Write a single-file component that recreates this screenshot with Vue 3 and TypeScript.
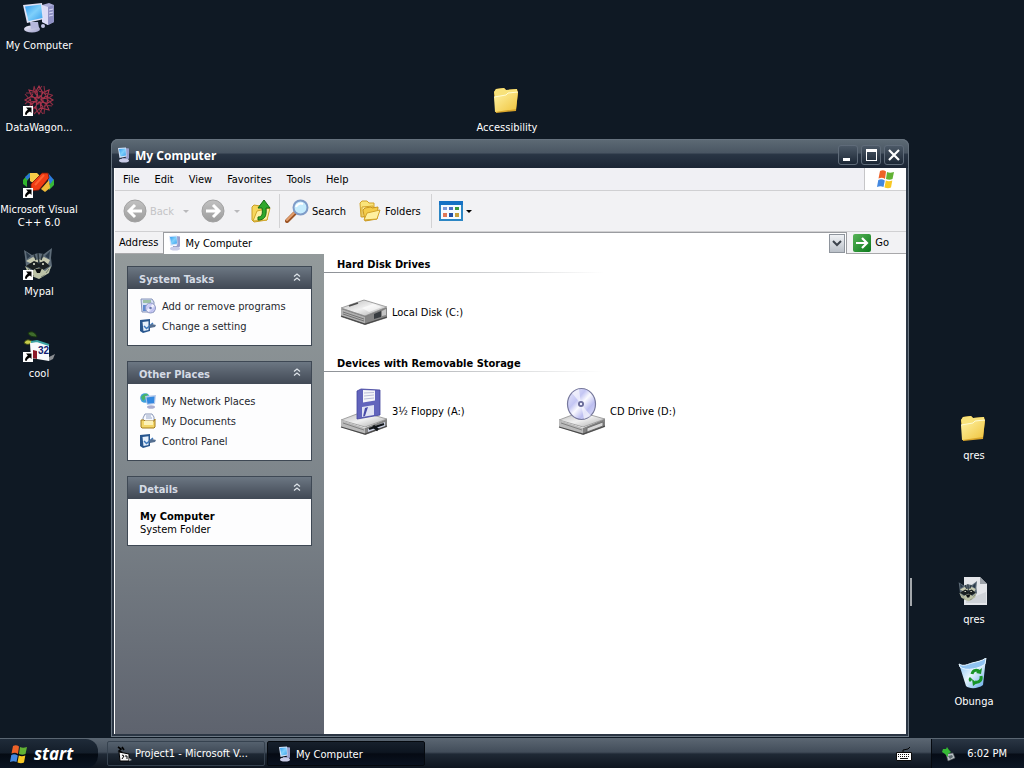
<script setup lang="ts">
import { ref } from 'vue'

interface DesktopIcon {
  label: string
  icon: string
  x: number
  y: number
  side?: 'right'
  shortcut?: boolean
  mark?: string
}

const desktopIcons: DesktopIcon[] = [
  { label: 'My Computer', icon: 'computer', x: 0, y: 2 },
  { label: 'DataWagon...', icon: 'wagon', x: 0, y: 84, shortcut: true },
  { label: 'Microsoft Visual\nC++ 6.0', icon: 'visual', x: 0, y: 166, shortcut: true },
  { label: 'Mypal', icon: 'raccoon', x: 0, y: 248, shortcut: true },
  { label: 'cool', icon: 'cool', x: 0, y: 330, shortcut: true, mark: '32' },
  { label: 'Accessibility', icon: 'folder', x: 468, y: 84 },
  { label: 'qres', icon: 'folder', x: 11, y: 412, side: 'right' },
  { label: 'qres', icon: 'raccoonfile', x: 11, y: 576, side: 'right' },
  { label: 'Obunga', icon: 'bin', x: 11, y: 658, side: 'right' },
]

function place(item: DesktopIcon) {
  return { [item.side ?? 'left']: item.x + 'px', top: item.y + 'px' }
}

const menus = ['File', 'Edit', 'View', 'Favorites', 'Tools', 'Help']

const taskPanels = [
  {
    title: 'System Tasks',
    links: [
      { label: 'Add or remove programs', icon: 'programs' },
      { label: 'Change a setting', icon: 'setting' },
    ],
  },
  {
    title: 'Other Places',
    links: [
      { label: 'My Network Places', icon: 'network' },
      { label: 'My Documents', icon: 'documents' },
      { label: 'Control Panel', icon: 'setting' },
    ],
  },
]

const groups = [
  { title: 'Hard Disk Drives', items: [{ label: 'Local Disk (C:)', icon: 'disk' }] },
  {
    title: 'Devices with Removable Storage',
    items: [
      { label: '3½ Floppy (A:)', icon: 'floppy' },
      { label: 'CD Drive (D:)', icon: 'cd' },
    ],
  },
]

const address = ref('My Computer')
</script>

<template>
  <div class="screen">
    <svg class="sprite" aria-hidden="true">
      <defs>
        <linearGradient id="gScreen" x1="0" y1="0" x2="1" y2="1">
          <stop offset="0" stop-color="#2f9bf0" /><stop offset="0.5" stop-color="#7fd0fb" /><stop offset="1" stop-color="#3aa0ec" />
        </linearGradient>
        <linearGradient id="gCase" x1="0" y1="0" x2="1" y2="1">
          <stop offset="0" stop-color="#f2f2fc" /><stop offset="1" stop-color="#9a9cc8" />
        </linearGradient>
        <linearGradient id="gFolder" x1="0" y1="0" x2="1" y2="1">
          <stop offset="0" stop-color="#fff3a4" /><stop offset="1" stop-color="#efc33c" />
        </linearGradient>
        <linearGradient id="gBin" x1="0" y1="0" x2="1" y2="1">
          <stop offset="0" stop-color="#6fb4f0" /><stop offset="0.5" stop-color="#e6f5fd" /><stop offset="1" stop-color="#5ca2e6" />
        </linearGradient>
        <linearGradient id="gMetal" x1="0" y1="0" x2="1" y2="1">
          <stop offset="0" stop-color="#b8b8b8" /><stop offset="0.5" stop-color="#f0f0f0" /><stop offset="1" stop-color="#a8a8a8" />
        </linearGradient>
        <linearGradient id="gDisc" x1="0" y1="0" x2="1" y2="1">
          <stop offset="0" stop-color="#ececfa" /><stop offset="0.35" stop-color="#c4c6f4" /><stop offset="0.5" stop-color="#fafaff" /><stop offset="0.7" stop-color="#bcbef0" /><stop offset="1" stop-color="#e6e6fa" />
        </linearGradient>
        <linearGradient id="gGray" x1="0" y1="0" x2="0" y2="1">
          <stop offset="0" stop-color="#c2c2c2" /><stop offset="1" stop-color="#9c9c9c" />
        </linearGradient>
        <linearGradient id="gGo" x1="0" y1="0" x2="1" y2="1">
          <stop offset="0" stop-color="#58b458" /><stop offset="1" stop-color="#0c7a1c" />
        </linearGradient>
      </defs>

      <symbol id="i-computer" viewBox="0 0 32 32">
        <path d="M19 3l7-2 5 2v17l-6 3-6-3z" fill="#a9abd6" />
        <path d="M19 3l6 2v18l-6-3z" fill="#dcdcf6" />
        <path d="M25 5l6-2v17l-6 3z" fill="#8f91c4" />
        <path d="M26 8l4-1M26 11l4-1M26 14l4-1" stroke="#d8d9f6" stroke-width="1" />
        <ellipse cx="9" cy="27" rx="8" ry="3.600" fill="url(#gCase)" />
        <path d="M7 20h8l1 6-8 1z" fill="#b6b8dc" />
        <path d="M0 3l19-2 2 16-17 4z" fill="#dfe2f6" />
        <path d="M2 4.500l16-2 1.500 13.500-14 3z" fill="url(#gScreen)" />
        <circle cx="20" cy="24" r="2" fill="#c2c4e4" />
      </symbol>

      <symbol id="i-pc" viewBox="0 0 16 16">
        <path d="M9 1l4 .5v10l-3 1.500z" fill="#9a9fcc" />
        <path d="M2 1l8-.5.5 9-7 1.500z" fill="#d6e4fa" />
        <path d="M3 2l6.500-.5.5 7-5.500 1z" fill="url(#gScreen)" />
        <path d="M6 11h4l1 2H6z" fill="#8488b4" />
        <ellipse cx="8" cy="13.500" rx="5" ry="2" fill="#c9cce8" />
      </symbol>

      <symbol id="i-wagon" viewBox="0 0 32 32">
        <g fill="none" stroke="#a8344c" stroke-width="1.100">
          <circle cx="16" cy="16" r="4" stroke-dasharray="2 1" />
          <circle cx="16" cy="16" r="8.500" stroke-dasharray="3 2" />
          <path d="M16 2l4 7-4 5-4-5zM16 30l4-7-4-5-4 5zM2 16l7-4 5 4-5 4zM30 16l-7-4-5 4 5 4zM6 6l8 2 1 6-6-1zM26 6l-2 8-6 1 1-6zM6 26l2-8 6-1-1 6zM26 26l-8-2-1-6 6 1z" />
          <path d="M11 2l2 7 6-7M21 2l1 7 7 2M30 11l-6 4 6 6M29 22l-7-1-1 9M20 30l-4-5-5 5M10 29v-6l-7-1M2 20l5-4-5-6M3 9l7 0 1-6" stroke="#8a2c42" />
        </g>
      </symbol>

      <symbol id="i-visual" viewBox="0 0 32 32">
        <path d="M0 14l6-7 3 2-5 6v6l-4-3z" fill="#30b42c" />
        <path d="M2 11l5-4 2 2-5 5z" fill="#2a74d8" />
        <path d="M7 7h7l4 4-5 8-6-4z" fill="#f8cc48" />
        <path d="M25 7l6 7-3 6-3-5z" fill="#2c7ce0" />
        <path d="M31 13v6l-5 5-1-4 3-3z" fill="#38b838" />
        <path d="M18 23l8-9 1 8-5 4z" fill="#f0bc38" />
        <path d="M8 18L19 7l6 0 1 5-10 12-8 1z" fill="#f03c14" stroke="#701408" stroke-width=".8" />
        <path d="M12 19l9-10" stroke="#ff6030" stroke-width="2" />
      </symbol>

      <symbol id="i-raccoon" viewBox="0 0 32 32">
        <path d="M2 9L1 2l8 5 6-2 6 1 8-6-1 10 1 8-4 7-8 4-8-3-6-8z" fill="#5e6c78" />
        <path d="M3 4l5 4-4 3zM27 3l-5 5 4 3z" fill="#2a3a4a" />
        <path d="M3 13l7-4 5 3 6-3 6 3-2 4-8-2-8 2z" fill="#c6c9b0" />
        <path d="M3 18l8-5 5 2 5-2 6 5-7 4-4-3-6 3z" fill="#1a2021" />
        <path d="M2 18l7 5 5-3 4 0 4 3 6-5-2 7-5 3-5 3-5-2-6-4z" fill="#bcc2a6" />
        <path d="M12 21l7-1-2 5h-3z" fill="#0c1012" />
        <path d="M15 5l1 11M11 6l2 6M20 6l-2 6" stroke="#28343a" stroke-width="1.500" />
        <path d="M10 16h2M19 16h2" stroke="#e8ead8" stroke-width="1.500" />
        <path d="M7 26l4 2M22 27l-4 2M5 21l4 4M26 21l-3 4" stroke="#747c6c" stroke-width="1" />
      </symbol>

      <symbol id="i-cool" viewBox="0 0 32 32">
        <path d="M5 3c4-3 8 0 9 4-5 0-8-1-9-4z" fill="#3f6b2c" stroke="#16300e" />
        <path d="M1 13c2-4 5-4 9-1-4 3-6 3-9 1z" fill="#c8cc4c" stroke="#3c4a10" />
        <path d="M7 13l6-2 13 4v16L8 28z" fill="#f8fafc" />
        <path d="M8 12l6-1 12 4" stroke="#3ca4a4" stroke-width="2" fill="none" />
        <path d="M10 20l4 1v8l-4-1z" fill="#8c1828" />
        <path d="M26 27l6-3-2 5-4 2z" fill="#8b8e92" />
      </symbol>

      <symbol id="i-folder" viewBox="0 0 32 32">
        <path d="M3 8l2-3 8-1 2 2 11-1 1 3-2 19-20 2z" fill="#d9a52b" />
        <path d="M3 8l2-3 8-1 2 2 11-1v5L4 14z" fill="#f8e27a" />
        <path d="M3 13l12-2 2-2 10-1-2 17-21 3z" fill="url(#gFolder)" />
        <path d="M3 13l12-2 2-2 10-1" fill="none" stroke="#fffbd2" stroke-width="1" />
      </symbol>

      <symbol id="i-raccoonfile" viewBox="0 0 32 32">
        <path d="M6 1h16l7 7v21H6z" fill="#e4e6ea" />
        <path d="M22 1v7h7z" fill="#9ba1a8" />
        <path d="M8 24l20-8v11H8z" fill="#cfd3d8" />
        <use href="#i-raccoon" x="0" y="5" width="21" height="21" />
      </symbol>

      <symbol id="i-bin" viewBox="0 0 32 32">
        <path d="M1 6c5 3 9 0 13-1s10-2 14-5l-3 27c-5 4-14 4-17 1z" fill="url(#gBin)" />
        <path d="M1 6c5 3 9 0 13-1s10-2 14-5l-1 6c-4 4-19 8-25 3z" fill="#8fc2f0" stroke="#e8f6ff" stroke-width="1" />
        <g fill="none" stroke="#189428" stroke-width="3">
          <path d="M14 16c1-4 5-5 8-2M23 18c1 4-2 7-6 6M13 23c-1-1-1-2 0-3" />
        </g>
        <path d="M24 10l-1 6-5-1zM14 21l1 7 4-3z" fill="#189428" />
      </symbol>

      <symbol id="i-shortcut" viewBox="0 0 10 10">
        <path d="M0 0h10v10H0z" fill="#fff" />
        <path d="M3 1.500h5.500V7L7 5.500C5 6.500 4 7.500 3.600 9L2 8.500C2 6.500 3 5 4.800 3.500z" fill="#000" />
      </symbol>

      <symbol id="i-programs" viewBox="0 0 16 16">
        <path d="M1 1h11l2 3v10H2z" fill="#d5e0f4" stroke="#8592b8" />
        <path d="M3 2h8v3H3z" fill="#9cc0a4" />
        <path d="M3 7h5v6H3z" fill="#5f8ad0" />
        <circle cx="10.500" cy="10" r="5" fill="url(#gDisc)" stroke="#8f9ac4" />
        <circle cx="10.500" cy="10" r="1.300" fill="#6b78b0" />
      </symbol>

      <symbol id="i-setting" viewBox="0 0 16 16">
        <path d="M0 2l10-1v12l-7 2-3-2z" fill="#28568e" />
        <path d="M2.500 4l6-.8v8.800l-5 1z" fill="#e6f0fc" />
        <path d="M4 8l2.500 2.500L13 5" fill="none" stroke="#3d78bc" stroke-width="1.500" />
        <path d="M9 8l3-2 4 1-1 2-5 1z" fill="#566f90" />
      </symbol>

      <symbol id="i-network" viewBox="0 0 16 16">
        <circle cx="5" cy="5" r="4.800" fill="#3f9fdc" />
        <path d="M1 4c2-3 5-4 7-3L6 5 3 8z" fill="#48b468" />
        <path d="M5 3l11-1-1 9-8 1z" fill="#b5c8ea" />
        <path d="M6.500 4.500l8-1-.5 6.500-6.500.8z" fill="#3388e0" />
        <ellipse cx="11" cy="14" rx="4" ry="1.800" fill="#a9add0" />
      </symbol>

      <symbol id="i-documents" viewBox="0 0 16 16">
        <path d="M3 5l2-4h7l2 3v6H3z" fill="#f7f9ff" stroke="#8b98b8" />
        <path d="M6 3h5M6 5h6" stroke="#98a8c8" />
        <path d="M1 7h3l1 1h9l1-2v8l-1 1H2l-1-1z" fill="#f3d66a" stroke="#a37c1c" />
        <path d="M4 8h9v4H4z" fill="#fdf2b8" />
      </symbol>

      <symbol id="i-disk" viewBox="0 0 48 48">
        <path d="M1 21l23-9 23 8v10L25 37 1 29z" fill="#7c7c7c" />
        <path d="M1 20l23-8 23 7-22 9z" fill="url(#gMetal)" stroke="#8e8e8e" stroke-width=".8" />
        <path d="M1 21l24 8v7L1 28z" fill="#b0b0b0" />
        <path d="M25 29l22-9v9l-22 7z" fill="#858585" />
        <path d="M34 26l7-3v6l-7 2z" fill="#383c40" />
        <path d="M42 23l4-2v6l-4 1z" fill="#c4c4c4" />
        <path d="M3 24l21 7M3 26l21 7" stroke="#747474" stroke-width="1" />
        <path d="M9 18l9-3" stroke="#4c4c4c" stroke-width="1.500" />
        <path d="M22 20l11-4 9 3-13 5z" fill="#fff" opacity=".6" />
        <path d="M1 28l24 8 22-7" fill="none" stroke="#484848" stroke-width="1.200" />
      </symbol>

      <symbol id="i-drivebase" viewBox="0 0 48 48">
        <path d="M1 33l21-8 25 7-22 8z" fill="url(#gMetal)" stroke="#909090" stroke-width=".8" />
        <path d="M1 33l24 8v7L1 40z" fill="#bababa" />
        <path d="M25 41l22-9v8l-22 8z" fill="#838383" />
        <path d="M3 36l21 7" stroke="#828282" stroke-width="1" />
        <path d="M1 40l24 7 22-8" fill="none" stroke="#484848" stroke-width="1.200" />
      </symbol>

      <symbol id="i-floppy" viewBox="0 0 48 48">
        <use href="#i-drivebase" />
        <path d="M28 42l17-7v4l-17 6z" fill="#cdd2e4" />
        <path d="M29 42l15-5" stroke="#101418" stroke-width="2" />
        <path d="M33 39l5 4" stroke="#101418" stroke-width="3" />
        <path d="M17 4l4-2 19 1v25l-23 4z" fill="#6264bc" stroke="#42449c" stroke-width=".8" />
        <path d="M23 3l12 .5v10l-12 2z" fill="#f5f5f9" />
        <path d="M24 6l10-.5M24 9l10-1M24 12l10-1" stroke="#bbbdd8" />
        <path d="M22 20l12-2v10l-12 2z" fill="#e1e3f4" />
        <path d="M25 21l3-1-3 9-2 .5z" fill="#474aa8" />
      </symbol>

      <symbol id="i-cd" viewBox="0 0 48 48">
        <use href="#i-drivebase" />
        <path d="M29 41l16-6v4l-16 6z" fill="#d7d7d7" stroke="#626262" stroke-width=".8" />
        <ellipse cx="23.500" cy="17" rx="14" ry="15.500" fill="url(#gDisc)" stroke="#77799c" stroke-width="1.200" />
        <path d="M23 17L14 6l7-4zM23 17l10 12-7 3z" fill="#fff" opacity=".6" />
        <circle cx="23" cy="17" r="3" fill="#686a98" />
        <circle cx="23" cy="17" r="1.200" fill="#f3f3ff" />
      </symbol>

      <symbol id="i-flag" viewBox="0 0 20 20">
        <path d="M4 2c2-1 4-1 6 .5L9 10c-2-1.500-4-1.500-6.500-.5z" fill="#ee6228" />
        <path d="M11 3c2 1 4 1 7 0l-1.500 7c-2 1-4 1-6.500 0z" fill="#62b234" />
        <path d="M2.300 11c2-1 4-1 6.500.5L7.500 18C5.500 17 3.500 17 1 18z" fill="#4388e0" />
        <path d="M9.800 11.500c2 1 4 1 6.500 0L15 18.500c-2 1-4 1-6.500 0z" fill="#f8c824" />
      </symbol>

      <symbol id="i-back" viewBox="0 0 24 24">
        <circle cx="12" cy="12" r="11" fill="url(#gGray)" stroke="#a2a2a2" />
        <path d="M19 12H7M12 6l-6 6 6 6" fill="none" stroke="#fff" stroke-width="3" />
      </symbol>
      <symbol id="i-forward" viewBox="0 0 24 24">
        <circle cx="12" cy="12" r="11" fill="url(#gGray)" stroke="#a2a2a2" />
        <path d="M5 12h12M12 6l6 6-6 6" fill="none" stroke="#fff" stroke-width="3" />
      </symbol>

      <symbol id="i-up" viewBox="0 0 24 24">
        <path d="M3 8l2-2 6 1 2 2h5v12l-13 2-2-2z" fill="#f6d75c" stroke="#c99e24" />
        <path d="M4 22l4-10 13-3-3 12z" fill="#fff0a0" stroke="#cfa62c" />
        <path d="M9 18c4 0 5-3 4-9h-4l6-8 6 8h-4c1 9-2 12-8 12z" fill="#30a82c" stroke="#146c14" />
      </symbol>

      <symbol id="i-search" viewBox="0 0 24 24">
        <path d="M10 14l-8 8" stroke="#9b5426" stroke-width="4" stroke-linecap="round" />
        <path d="M9 14l-7 7" stroke="#e4a070" stroke-width="2" stroke-linecap="round" />
        <circle cx="15.500" cy="8.500" r="7" fill="#c6ecfd" stroke="#7f9cc8" stroke-width="2" />
        <path d="M11 8c1-3 4-4 7-3" stroke="#fff" stroke-width="2" fill="none" />
      </symbol>

      <symbol id="i-folders" viewBox="0 0 24 24">
        <path d="M2 4l2-2h5l2 2h5v12L3 18z" fill="#fae47a" stroke="#d2a32a" />
        <path d="M4 8l11-1v8L4 18z" fill="#ffefa2" stroke="#d2a32a" />
        <path d="M5 11l2-2 6-1 1 1 6-1-1 12-12 2z" fill="#f4cc4a" stroke="#c8961e" />
        <path d="M6 21l3-7 13-3-3 9z" fill="#fff0a0" stroke="#d2a32a" />
      </symbol>

      <symbol id="i-views" viewBox="0 0 24 20">
        <path d="M1 1h22v18H1z" fill="#f7fbff" stroke="#2c86c4" stroke-width="2" />
        <path d="M0 0h24v4H0z" fill="#1672c4" />
        <path d="M4 6h4v3H4z" fill="#7c98d8" /><path d="M10 6h4v3h-4z" fill="#4a72c8" /><path d="M16 6h4v3h-4z" fill="#3c9a3c" />
        <path d="M4 12h4v4H4z" fill="#e07858" /><path d="M10 12h4v4h-4z" fill="#2450a4" /><path d="M16 12h4v4h-4z" fill="#c8a03c" />
      </symbol>

      <symbol id="i-go" viewBox="0 0 18 18">
        <rect width="18" height="18" rx="2" fill="url(#gGo)" />
        <path d="M3 9h10M9 4l5 5-5 5" fill="none" stroke="#fff" stroke-width="2.200" />
      </symbol>

      <symbol id="i-project" viewBox="0 0 16 16">
        <path d="M2 1l3 2-2 2 4 2M6 1l2 3" stroke="#000" stroke-width="1.600" fill="none" />
        <path d="M3 6l10 2v7H4z" fill="#f4f4f4" stroke="#000" />
        <path d="M6 9l2 1-2 3M9 10h2v3" stroke="#000" fill="none" />
        <path d="M13 12l3 2-3 1z" fill="#b6b6b6" />
      </symbol>

      <symbol id="i-keyboard" viewBox="0 0 16 14">
        <path d="M7 5V3l5-1 2-2" fill="none" stroke="#050505" />
        <path d="M.5 5.500h15v8H.5z" fill="#fff" stroke="#0a0a0a" />
        <path d="M2 7.500h12M2 9.500h12" stroke="#111" stroke-dasharray="1 1" />
        <path d="M4 11.500h8" stroke="#111" />
      </symbol>

      <symbol id="i-tray" viewBox="0 0 16 16">
        <path d="M5 8l7-1 2 5-7 3z" fill="#b9c0c4" stroke="#4c5458" stroke-width=".6" />
        <path d="M7 10l4-1 1 2-3 2z" fill="#5e6a70" />
        <path d="M2 3l3 0 1-2 2 3 2 2-3 2v3L4 8 1 6z" fill="#35ba35" />
      </symbol>

      <symbol id="i-chevrons" viewBox="0 0 8 8">
        <path d="M1 3.500L4 1l3 2.500M1 7.500L4 5l3 2.500" fill="none" stroke="#dfe4ea" stroke-width="1.200" />
      </symbol>
    </svg>

    <main class="desktop">
      <a
        v-for="(item, i) in desktopIcons"
        :key="i"
        href="#"
        class="desk-icon"
        :style="place(item)"
      >
        <span class="glyph">
          <svg class="s32"><use :href="'#i-' + item.icon" /></svg>
          <span v-if="item.mark" class="mark">{{ item.mark }}</span>
          <svg v-if="item.shortcut" class="shortcut"><use href="#i-shortcut" /></svg>
        </span>
        <span class="desk-label">{{ item.label }}</span>
      </a>
      <span class="sliver"></span>

      <section class="window" aria-label="My Computer">
        <header class="titlebar">
          <svg class="s16"><use href="#i-pc" /></svg>
          <h1>My Computer</h1>
          <div class="controls">
            <button type="button" aria-label="Minimize">
              <svg viewBox="0 0 18 18"><path d="M4 12h7v3H4z" fill="#fff" /></svg>
            </button>
            <button type="button" aria-label="Maximize">
              <svg viewBox="0 0 18 18"><path d="M4 3h11v12H4zM5 6v8h9V6z" fill="#fff" fill-rule="evenodd" /></svg>
            </button>
            <button type="button" aria-label="Close">
              <svg viewBox="0 0 18 18"><path d="M4 4l10 10M14 4L4 14" stroke="#fff" stroke-width="2.200" /></svg>
            </button>
          </div>
        </header>

        <div class="client">
          <nav class="menubar">
            <button v-for="menu in menus" :key="menu" type="button">{{ menu }}</button>
            <span class="brand"><svg class="s20"><use href="#i-flag" /></svg></span>
          </nav>

          <div class="toolbar">
            <button type="button" class="back" disabled>
              <svg class="s24"><use href="#i-back" /></svg><span>Back</span><i class="caret"></i>
            </button>
            <button type="button" class="forward" aria-label="Forward" disabled>
              <svg class="s24"><use href="#i-forward" /></svg><i class="caret"></i>
            </button>
            <button type="button" class="up" aria-label="Up">
              <svg class="s24"><use href="#i-up" /></svg>
            </button>
            <span class="rule"></span>
            <button type="button" class="search"><svg class="s24"><use href="#i-search" /></svg>Search</button>
            <button type="button" class="folders"><svg class="s24"><use href="#i-folders" /></svg>Folders</button>
            <span class="rule"></span>
            <button type="button" class="views" aria-label="Views">
              <svg class="s24"><use href="#i-views" /></svg><i class="caret"></i>
            </button>
          </div>

          <div class="addressbar">
            <label for="address">Address</label>
            <div class="combo">
              <svg class="s16"><use href="#i-pc" /></svg>
              <input id="address" v-model="address" type="text" />
              <button type="button" aria-label="Show addresses">
                <svg viewBox="0 0 10 8"><path d="M1 2l4 4 4-4" fill="none" stroke="#3c434c" stroke-width="2" /></svg>
              </button>
            </div>
            <button type="button" class="go"><svg><use href="#i-go" /></svg>Go</button>
          </div>

          <div class="body">
            <aside class="sidebar">
              <section v-for="panel in taskPanels" :key="panel.title" class="panel">
                <button type="button" class="panel-head">
                  {{ panel.title }}<svg><use href="#i-chevrons" /></svg>
                </button>
                <ul>
                  <li v-for="link in panel.links" :key="link.label">
                    <a href="#"><svg class="s16"><use :href="'#i-' + link.icon" /></svg>{{ link.label }}</a>
                  </li>
                </ul>
              </section>
              <section class="panel">
                <button type="button" class="panel-head">
                  Details<svg><use href="#i-chevrons" /></svg>
                </button>
                <div class="details">
                  <strong>My Computer</strong>
                  <span>System Folder</span>
                </div>
              </section>
            </aside>

            <div class="content">
              <section v-for="group in groups" :key="group.title">
                <h2>{{ group.title }}</h2>
                <div class="items">
                  <a v-for="drive in group.items" :key="drive.label" href="#">
                    <svg class="s48"><use :href="'#i-' + drive.icon" /></svg>{{ drive.label }}
                  </a>
                </div>
              </section>
            </div>
          </div>
        </div>
      </section>
    </main>

    <footer class="taskbar">
      <button type="button" class="start"><svg class="s20"><use href="#i-flag" /></svg>start</button>
      <div class="tasks">
        <button type="button"><svg class="s16"><use href="#i-project" /></svg>Project1 - Microsoft V...</button>
        <button type="button" class="active"><svg class="s16"><use href="#i-pc" /></svg>My Computer</button>
      </div>
      <svg class="keyboard"><use href="#i-keyboard" /></svg>
      <div class="tray">
        <svg class="s16"><use href="#i-tray" /></svg>
        <time>6:02 PM</time>
      </div>
    </footer>
  </div>
</template>

<style>
html,
body,
#app {
  height: 100%;
  margin: 0;
}
</style>

<style scoped>
.screen {
  display: flex;
  flex-direction: column;
  height: 100vh;
  overflow: hidden;
  background: #0f1924;
  font-family: "DejaVu Sans Condensed", "Noto Sans", sans-serif;
  font-size: 11px;
  line-height: 13px;
  color: #000;
}

.screen * {
  box-sizing: border-box;
}

.sprite {
  position: absolute;
  width: 0;
  height: 0;
}

button {
  margin: 0;
  padding: 0;
  border: 0;
  background: none;
  font: inherit;
  color: inherit;
}

a {
  color: inherit;
  text-decoration: none;
}

svg {
  display: block;
  flex: none;
}

.s16 { width: 16px; height: 16px; }
.s20 { width: 20px; height: 20px; }
.s24 { width: 24px; height: 24px; }
.s32 { width: 32px; height: 32px; }
.s48 { width: 48px; height: 48px; }

.desktop {
  position: relative;
  flex: 1;
  min-height: 0;
}

.desk-icon {
  position: absolute;
  display: flex;
  flex-direction: column;
  align-items: center;
  gap: 5px;
  width: 78px;
  color: #fff;
  text-align: center;
}

.desk-label {
  white-space: pre;
}

.glyph {
  position: relative;
}

.mark {
  position: absolute;
  top: 15px;
  right: 6px;
  font-family: "Liberation Sans", sans-serif;
  font-size: 10px;
  line-height: 12px;
  font-weight: 700;
  color: #101c70;
}

.shortcut {
  position: absolute;
  left: 0;
  bottom: 0;
  width: 10px;
  height: 10px;
}

.sliver {
  position: absolute;
  top: 578px;
  right: 112px;
  width: 2px;
  height: 28px;
  background: #a4a8ac;
}

.window {
  position: absolute;
  inset: 139px 115px 1px 111px;
  display: flex;
  flex-direction: column;
  padding: 0 3px 3px;
  border-radius: 7px 7px 0 0;
  background: #2b3644;
  box-shadow: inset 0 0 0 1px #6c7884;
}

.titlebar {
  display: flex;
  align-items: center;
  gap: 3px;
  height: 29px;
  margin: 0 -3px;
  padding: 2px 4px 0;
  border: 1px solid #66727e;
  border-bottom: 0;
  border-radius: 7px 7px 0 0;
  background: linear-gradient(#5c6974, #4a5663 45%, #293544 52%, #1b2534);
}

.titlebar h1 {
  flex: 1;
  margin: 0;
  padding-top: 1px;
  font-family: "Noto Sans", sans-serif;
  font-size: 12px;
  line-height: 16px;
  font-weight: 700;
  color: #fff;
}

.controls {
  display: flex;
  gap: 3px;
}

.controls button {
  width: 20px;
  height: 20px;
  border: 1px solid #5f6b79;
  border-radius: 3px;
  background: linear-gradient(#4b5866, #1d2836);
}

.client {
  display: flex;
  flex: 1;
  flex-direction: column;
  min-height: 0;
  border-left: 1px solid #fff;
  background: #f2f2f4;
}

.menubar {
  display: flex;
  align-items: stretch;
  height: 23px;
  padding-left: 1px;
  border-bottom: 1px solid #d0d0d2;
  background: #f0f0f4;
}

.menubar button {
  padding: 0 8px 0 7px;
}

.brand {
  display: flex;
  align-items: center;
  justify-content: center;
  width: 42px;
  margin-left: auto;
  border-left: 1px solid #c6c6c8;
  background: #fff;
}

.toolbar {
  display: flex;
  align-items: center;
  height: 40px;
  padding: 0 8px;
}

.toolbar button {
  display: flex;
  align-items: center;
}

.toolbar button:disabled {
  color: #c4c4c6;
}

.caret {
  border: 3px solid transparent;
  border-top-color: #000;
  border-bottom: 0;
}

.toolbar button:disabled .caret {
  border-top-color: #b9b9bb;
}

.back { gap: 3px; width: 78px; }
.back .caret { margin-left: auto; margin-right: 12px; }
.forward { justify-content: space-between; width: 39px; }
.up { margin: 0 6px 0 9px; }
.search { gap: 3px; width: 73px; margin-left: 5px; }
.folders { gap: 3px; margin-right: 10px; }
.views { gap: 3px; margin-left: 7px; }

.rule {
  width: 1px;
  height: 34px;
  background: #d2d2d4;
}

.addressbar {
  display: flex;
  align-items: center;
  gap: 5px;
  height: 23px;
  padding: 0 17px 0 4px;
  border-top: 1px solid #d0d0d2;
  border-bottom: 1px solid #a8a8aa;
}

.combo {
  display: flex;
  flex: 1;
  align-items: center;
  gap: 2px;
  height: 22px;
  padding: 0 1px 0 3px;
  border: 1px solid #9a9ca0;
  border-bottom: 0;
  background: #fff;
}

.combo input {
  flex: 1;
  min-width: 0;
  padding: 1px 0 0;
  border: 0;
  outline: 0;
  background: none;
  font: inherit;
}

.combo button {
  display: flex;
  align-items: center;
  justify-content: center;
  width: 16px;
  height: 19px;
  border: 1px solid #8e949c;
  background: linear-gradient(#f0f2f5, #bac0c8);
}

.combo button svg {
  width: 10px;
  height: 8px;
}

.go {
  display: flex;
  align-items: center;
  gap: 4px;
  margin-left: 1px;
}

.go svg {
  width: 18px;
  height: 18px;
}

.body {
  display: flex;
  flex: 1;
  min-height: 0;
}

.sidebar {
  display: flex;
  flex: none;
  flex-direction: column;
  gap: 15px;
  width: 209px;
  padding: 12px;
  background: linear-gradient(#939a9b, #7c848a 50%, #5e636e);
}

.panel {
  border: 1px solid #3e4854;
  background: #fdfdfe;
}

.panel-head {
  display: flex;
  align-items: center;
  justify-content: space-between;
  width: 100%;
  height: 22px;
  padding: 2px 10px 0 11px;
  background: linear-gradient(#6c7783, #565f6b 50%, #414955);
  font-weight: 700;
  color: #d5dbe5;
}

.panel-head svg {
  width: 8px;
  height: 8px;
  margin-bottom: 4px;
}

.panel ul {
  display: flex;
  flex-direction: column;
  gap: 4px;
  margin: 0;
  padding: 9px 12px 11px;
  list-style: none;
}

.panel ul a {
  display: flex;
  align-items: center;
  gap: 6px;
  color: #25282e;
}

.details {
  display: flex;
  flex-direction: column;
  padding: 11px 12px 9px;
}

.content {
  flex: 1;
  min-width: 0;
  background: #fff;
}

.content h2 {
  margin: 0;
  padding: 4px 0 1px 13px;
  border-bottom: 1px solid;
  border-image: linear-gradient(to right, #8b8f94, #fff 280px) 1;
  font-size: 11px;
  line-height: 13px;
}

.items {
  display: flex;
  flex-wrap: wrap;
  padding: 15px 0 17px 16px;
}

.items a {
  display: flex;
  align-items: center;
  gap: 4px;
  width: 218px;
}

.taskbar {
  display: flex;
  align-items: stretch;
  height: 30px;
  border-top: 1px solid #5a6672;
  background: linear-gradient(#5a6571, #424d5a 45%, #1f2935 52%, #0e151f);
  color: #fff;
}

.start {
  display: flex;
  align-items: center;
  gap: 5px;
  width: 98px;
  padding-left: 9px;
  border-radius: 0 12px 12px 0;
  background: linear-gradient(#1f2b39, #131d29 48%, #040a12 52%, #0a1422);
  font-family: "Noto Sans", sans-serif;
  font-size: 17px;
  font-style: italic;
  font-weight: 700;
}

.tasks {
  display: flex;
  flex: 1;
  gap: 2px;
  padding: 2px 9px;
}

.tasks button {
  display: flex;
  align-items: center;
  gap: 3px;
  width: 158px;
  padding: 0 8px;
  border: 1px solid #36424f;
  border-radius: 2px;
  background: linear-gradient(#55616e, #404b58 45%, #1e2834 52%, #101822);
}

.tasks .active {
  padding: 1px 9px 0;
  border-color: #05090e;
  background: linear-gradient(#17202c, #0d1520 45%, #050a13 52%, #0a1220);
}

.keyboard {
  align-self: center;
  width: 16px;
  height: 14px;
  margin-right: 19px;
}

.tray {
  display: flex;
  align-items: center;
  gap: 10px;
  padding: 0 17px 0 9px;
  border-left: 1px solid #05090f;
  background: linear-gradient(#2a3644, #17212e 48%, #060c16 52%, #0c1624);
}
</style>
